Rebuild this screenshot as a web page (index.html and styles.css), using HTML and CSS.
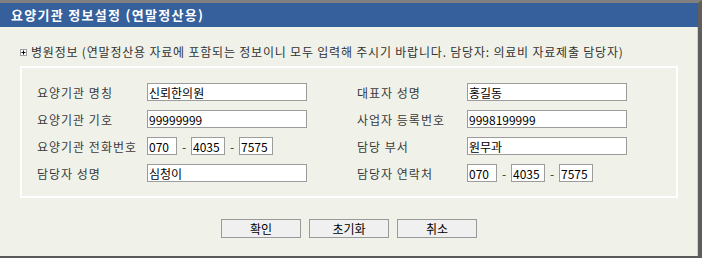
FILE: index.html
```html
<!DOCTYPE html>
<html>
<head>
    <title>요양기관 정보설정</title>
    <link rel="stylesheet" href="styles.css">
</head>
<body>
    <div class="window">
        <h1 class="title">요양기관 정보설정 (연말정산용)</h1>

        <p class="note">
            <svg class="bullet" width="7" height="7" viewBox="0 0 7 7">
                <rect x="0.5" y="0.5" width="6" height="6" fill="#fff" stroke="#a0a0a0"/>
                <path d="M1.5 3.5h4M3.5 1.5v4" stroke="#000" stroke-width="1"/>
            </svg>
            병원정보 (연말정산용 자료에 포함되는 정보이니 모두 입력해 주시기 바랍니다. 담당자: 의료비 자료제출 담당자)
        </p>

        <div class="panel">
            <div class="form">
                <label class="label">요양기관 명칭</label>
                <input class="field" type="text" value="신뢰한의원">
                <span></span>
                <label class="label">대표자 성명</label>
                <input class="field" type="text" value="홍길동">

                <label class="label">요양기관 기호</label>
                <input class="field" type="text" value="99999999">
                <span></span>
                <label class="label">사업자 등록번호</label>
                <input class="field" type="text" value="9998199999">

                <label class="label">요양기관 전화번호</label>
                <div class="phone">
                    <input class="field tel1" type="text" value="070">
                    <span class="dash">-</span>
                    <input class="field tel2" type="text" value="4035">
                    <span class="dash">-</span>
                    <input class="field tel2" type="text" value="7575">
                </div>
                <span></span>
                <label class="label">담당 부서</label>
                <input class="field" type="text" value="원무과">

                <label class="label">담당자 성명</label>
                <input class="field" type="text" value="심청이">
                <span></span>
                <label class="label">담당자 연락처</label>
                <div class="phone">
                    <input class="field tel1" type="text" value="070">
                    <span class="dash">-</span>
                    <input class="field tel2" type="text" value="4035">
                    <span class="dash">-</span>
                    <input class="field tel2" type="text" value="7575">
                </div>
            </div>
        </div>

        <div class="buttons">
            <button class="btn">확인</button>
            <button class="btn">초기화</button>
            <button class="btn">취소</button>
        </div>
    </div>
</body>
</html>
```

FILE: styles.css
```css
html, body {
    margin: 0;
    padding: 0;
}

body {
    font-family: "Noto Sans CJK KR", "Noto Sans", sans-serif;
    font-size: 12px;
    background-color: #f0f2ea;
}

.window {
    box-sizing: border-box;
    width: 702px;
    height: 258px;
    border-top: 3px solid #808080;
    border-right: 4px solid #5e5e5e;
    border-bottom: 2px solid #5a5a5a;
    background-color: #f0f2ea;
    box-shadow: inset -1px 0 #cfcfcf;
}

.title {
    margin: 0;
    height: 24px;
    line-height: 24px;
    padding-left: 11px;
    background-color: #35609b;
    color: #fff;
    font-size: 13px;
    font-weight: bold;
    letter-spacing: 1.3px;
}

.note {
    margin: 18px 0 0 20px;
    line-height: 14px;
    color: #333;
    letter-spacing: 0.8px;
    display: flex;
    align-items: center;
}

.bullet {
    margin-right: 4px;
}

.panel {
    box-sizing: border-box;
    width: 658px;
    margin: 7px 0 0 20px;
    border: 2px solid #fff;
    padding: 15px 15px 14px;
}

.form {
    display: grid;
    grid-template-columns: 110px 160px 50px 110px 160px;
    grid-auto-rows: 18px;
    row-gap: 9px;
    align-items: center;
}

.label {
    color: #3a3a3a;
    letter-spacing: 1px;
}

.field {
    box-sizing: border-box;
    height: 18px;
    width: 160px;
    margin: 0;
    padding: 0 1px;
    border: 1px solid #9c9c9c;
    background: #fff;
    color: #000;
    font-family: "Noto Sans CJK KR", "Noto Sans", sans-serif;
    font-size: 12px;
    outline: none;
}

.phone {
    display: flex;
    align-items: center;
}

.tel1 {
    width: 30px;
}

.tel2 {
    width: 34px;
}

.dash {
    width: 14px;
    text-align: center;
    color: #333;
}

.buttons {
    display: flex;
    justify-content: center;
    gap: 8px;
    margin-top: 21px;
}

.btn {
    box-sizing: border-box;
    width: 80px;
    height: 19px;
    padding: 0;
    border: 1px solid #999;
    background: #f0f0f0;
    color: #000;
    font-family: "Noto Sans CJK KR", "Noto Sans", sans-serif;
    font-size: 12px;
    line-height: 16px;
}
```
